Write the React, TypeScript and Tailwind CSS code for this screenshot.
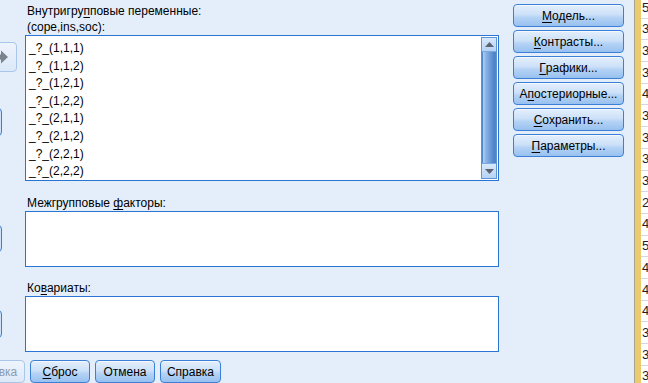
import React from "react";

const btnBase =
  "flex h-[23px] shrink-0 items-center justify-center rounded-[4px] border border-[#3b80d6] bg-[linear-gradient(to_bottom,#e4effc,#cde1f9_45%,#b4d2f5_60%,#98c1ef)] text-[12px] leading-none text-black shadow-[inset_0_1px_0_#f4f9ff]";

const btnOff =
  "flex h-[23px] shrink-0 items-center justify-center rounded-[4px] border border-[#a9c6ea] bg-[linear-gradient(to_bottom,#eef4fc,#dde9f8)] text-[12px] leading-none text-[#8a9bb3]";

function U({ children }: { children: React.ReactNode }) {
  return <span className="underline underline-offset-[2px]">{children}</span>;
}

const items = ["_?_(1,1,1)", "_?_(1,1,2)", "_?_(1,2,1)", "_?_(1,2,2)", "_?_(2,1,1)", "_?_(2,1,2)", "_?_(2,2,1)", "_?_(2,2,2)"];
const cells = ["5", "3", "3", "3", "4", "3", "3", "3", "3", "2", "4", "5", "4", "4", "4", "3", "3", "3"];

function ScrollBar() {
  return (
    <div className="my-[1px] mr-[1px] flex w-[16px] flex-col border border-[#5d95d8] bg-[#dbe9f9]">
      <div className="flex h-[14px] items-center justify-center border-b border-[#7aa8e0] bg-[linear-gradient(to_bottom,#d7e8fb,#b6d3f4)]">
        <svg width="9" height="5" viewBox="0 0 9 5"><path d="M0 5 L4.5 0 L9 5 Z" fill="#5b6470" /></svg>
      </div>
      <div className="flex-1 border-x border-[#4f86cc] bg-[linear-gradient(to_right,#b1cff2,#8ab3e4_25%,#6a9bd8_60%,#4b80c6)]" />
      <div className="flex h-[15px] items-center justify-center border-t border-[#7aa8e0] bg-[linear-gradient(to_bottom,#d7e8fb,#b6d3f4)]">
        <svg width="9" height="5" viewBox="0 0 9 5"><path d="M0 0 L4.5 5 L9 0 Z" fill="#5b6470" /></svg>
      </div>
    </div>
  );
}

export default function App() {
  return (
    <div className="flex h-[383px] w-[648px] overflow-hidden bg-[#e4eefa] font-['Liberation_Sans',Arial,sans-serif] text-[12px] text-black">
      {/* left part: strip + lists, then bottom buttons */}
      <div className="flex w-[499px] shrink-0 flex-col">
        <div className="flex h-[360px]">
          {/* clipped move buttons */}
          <div className="flex w-[25px] shrink-0 flex-col overflow-hidden">
            <div className="ml-[-22px] mt-[42px] flex h-[30px] w-[39px] items-center justify-center rounded-[4px] border border-[#a9c6ea] bg-[linear-gradient(to_bottom,#eef4fc,#dbe8f8)]">
              <svg width="16" height="14" viewBox="0 0 16 14" className="ml-[6px]">
                <path d="M1 4.5 H8 V0.5 L15 7 L8 13.5 V9.5 H1 Z" fill="#7a828c" />
              </svg>
            </div>
            <div className="ml-[-37px] mt-[36px] h-[28px] w-[39px] rounded-[4px] border border-[#3b80d6] bg-[#cfe2f9]" />
            <div className="ml-[-37px] mt-[89px] h-[27px] w-[39px] rounded-[4px] border border-[#3b80d6] bg-[#cfe2f9]" />
            <div className="ml-[-37px] mt-[58px] h-[28px] w-[39px] rounded-[4px] border border-[#3b80d6] bg-[#cfe2f9]" />
          </div>

          {/* lists */}
          <div className="flex w-[474px] shrink-0 flex-col">
            <div className="pl-[2px] pt-[3px] leading-[16px]">
              <div>
                Внутригру<U>п</U>повые переменные:
              </div>
              <div>(cope,ins,soc):</div>
            </div>
            <div className="flex h-[146px] overflow-hidden border border-[#2a74d3] bg-white">
              <div className="flex-1 overflow-hidden pl-[3px] pt-[4px] leading-[17.6px]">
                {items.map((t) => (
                  <div key={t}>{t}</div>
                ))}
              </div>
              <ScrollBar />
            </div>

            <div className="mt-[14px] pl-[2px] leading-[16px]">
              Межгрупповые <U>ф</U>акторы:
            </div>
            <div className="h-[56px] border border-[#2a74d3] bg-white" />

            <div className="mt-[13px] pl-[2px] leading-[16px]">
              Ко<U>в</U>ариаты:
            </div>
            <div className="h-[56px] border border-[#2a74d3] bg-white" />
          </div>
        </div>

        {/* bottom buttons */}
        <div className="flex gap-[5px]">
          <div className={`${btnOff} ml-[-35px] w-[60px]`}>Вставка</div>
          <div className={`${btnBase} w-[60px]`}>
            <U>С</U>брос
          </div>
          <div className={`${btnBase} w-[60px]`}>Отмена</div>
          <div className={`${btnBase} w-[61px]`}>Справка</div>
        </div>
      </div>

      {/* right buttons */}
      <div className="ml-[14px] flex w-[111px] shrink-0 flex-col gap-[3px] pt-[4px]">
        <div className={btnBase}>
          <U>М</U>одель...
        </div>
        <div className={btnBase}>
          <U>К</U>онтрасты...
        </div>
        <div className={btnBase}>
          <U>Г</U>рафики...
        </div>
        <div className={btnBase}>
          А<U>п</U>остериорные...
        </div>
        <div className={btnBase}>
          <U>С</U>охранить...
        </div>
        <div className={btnBase}>
          <U>П</U>араметры...
        </div>
      </div>

      {/* data grid edge */}
      <div className="ml-[10px] flex shrink-0">
        <div className="w-[7px] border-l border-[#a7a58c] bg-[#ebcb6e]" />
        <div className="flex w-[20px] flex-col bg-white">
          <div className="mt-[-3px]">
            {cells.map((c, i) => (
              <div key={i} className="flex h-[21.7px] items-center border-b border-[#d3d8e0] pl-[1px] text-[13px] text-[#2a1c1c]">
                {c}
              </div>
            ))}
          </div>
        </div>
      </div>
    </div>
  );
}
